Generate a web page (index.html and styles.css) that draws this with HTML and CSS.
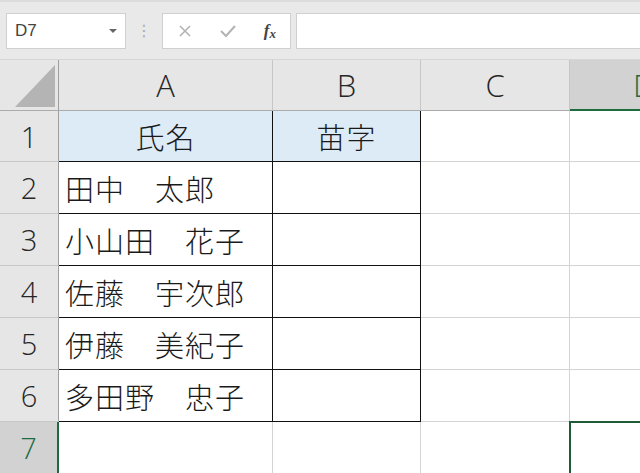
FILE: index.html
```html
<!DOCTYPE html>
<html lang="ja">
<head>
  <meta charset="UTF-8" />
  <meta name="viewport" content="width=device-width, initial-scale=1.0"/>
  <title>Excel - 氏名</title>
  <link rel="stylesheet" href="styles.css">
</head>
<body>
  <!-- 数式バー -->
  <div class="toolbar">
    <div class="namebox">
      <span>D7</span>
      <span class="arrow"></span>
    </div>
    <div class="dots">⋮</div>
    <div class="fxbox">
      <svg width="14" height="14" viewBox="0 0 14 14"><path d="M2 2 L12 12 M12 2 L2 12" stroke="#b3b3b3" stroke-width="1.6" fill="none"/></svg>
      <svg width="18" height="14" viewBox="0 0 18 14"><path d="M2 7 L7 12 L16 2" stroke="#b3b3b3" stroke-width="2" fill="none"/></svg>
      <span class="fx">f<sub>x</sub></span>
    </div>
    <div class="formula"></div>
  </div>

  <!-- シート -->
  <div class="sheet">
    <div class="corner">
      <svg width="59" height="50" viewBox="0 0 59 50"><polygon points="15,47 55,47 55,5" fill="#b4b4b4"/></svg>
    </div>
    <div class="colhead">A</div>
    <div class="colhead">B</div>
    <div class="colhead">C</div>
    <div class="colhead active">D</div>

    <div class="rowhead">1</div>
    <div class="cell b title">氏名</div>
    <div class="cell b title">苗字</div>
    <div class="cell"></div>
    <div class="cell"></div>

    <div class="rowhead">2</div>
    <div class="cell b">田中　太郎</div>
    <div class="cell b"></div>
    <div class="cell"></div>
    <div class="cell"></div>

    <div class="rowhead">3</div>
    <div class="cell b">小山田　花子</div>
    <div class="cell b"></div>
    <div class="cell"></div>
    <div class="cell"></div>

    <div class="rowhead">4</div>
    <div class="cell b">佐藤　宇次郎</div>
    <div class="cell b"></div>
    <div class="cell"></div>
    <div class="cell"></div>

    <div class="rowhead">5</div>
    <div class="cell b">伊藤　美紀子</div>
    <div class="cell b"></div>
    <div class="cell"></div>
    <div class="cell"></div>

    <div class="rowhead">6</div>
    <div class="cell b">多田野　忠子</div>
    <div class="cell b"></div>
    <div class="cell"></div>
    <div class="cell"></div>

    <div class="rowhead active">7</div>
    <div class="cell"></div>
    <div class="cell"></div>
    <div class="cell"></div>
    <div class="cell selected"></div>
  </div>
</body>
</html>
```

FILE: styles.css
```css
body {
  margin: 0;
  width: 640px;
  height: 473px;
  overflow: hidden;
  background: #fff;
  font-family: "Noto Sans CJK JP", sans-serif;
}

.toolbar {
  height: 60px;
  box-sizing: border-box;
  background: #e9e9e9;
  border-top: 2px solid #dcdcdc;
  border-bottom: 1px solid #d6d6d6;
  display: flex;
  align-items: flex-start;
  padding: 11px 0 0 6px;
  white-space: nowrap;
}
.namebox {
  width: 120px;
  height: 36px;
  box-sizing: border-box;
  background: #fff;
  border: 1px solid #d0d0d0;
  display: flex;
  align-items: center;
  justify-content: space-between;
  padding: 0 8px 0 8px;
  font-family: "Liberation Sans", sans-serif;
  font-size: 17px;
  color: #444;
}
.arrow {
  width: 0;
  height: 0;
  border-left: 4px solid transparent;
  border-right: 4px solid transparent;
  border-top: 4px solid #666;
}
.dots {
  width: 36px;
  text-align: center;
  line-height: 36px;
  color: #a8a8a8;
  font-family: "DejaVu Sans", sans-serif;
  font-size: 16px;
}
.fxbox {
  width: 129px;
  height: 36px;
  box-sizing: border-box;
  background: #fff;
  border: 1px solid #d0d0d0;
  display: flex;
  align-items: center;
  justify-content: space-between;
  padding: 0 14px 0 15px;
}
.fx {
  font-family: "Liberation Serif", serif;
  font-style: italic;
  font-weight: bold;
  font-size: 17px;
  color: #444;
}
.fx sub {
  font-size: 13px;
  vertical-align: -2px;
}
.formula {
  flex: 1;
  height: 36px;
  margin-left: 5px;
  box-sizing: border-box;
  background: #fff;
  border: 1px solid #d0d0d0;
  border-right: none;
}

.sheet {
  display: grid;
  grid-template-columns: 59px 214px 148px 149px 149px;
  grid-template-rows: 51px 51px 52px 52px 52px 52px 52px 52px;
}
.sheet > div {
  box-sizing: border-box;
}
.corner {
  background: #e6e6e6;
  border-right: 1px solid #9e9e9e;
  border-bottom: 1px solid #ababab;
}
.corner svg {
  display: block;
}
.colhead {
  background: #e6e6e6;
  border-right: 1px solid #c6c6c6;
  border-bottom: 1px solid #ababab;
  display: flex;
  align-items: center;
  justify-content: center;
  font-family: "Open Sans", sans-serif;
  font-weight: 300;
  font-size: 31px;
  color: #262626;
}
.colhead.active {
  background: #d2d2d2;
  border-bottom: 2px solid #1e6b40;
  color: #1e6b40;
}
.rowhead {
  background: #e6e6e6;
  border-right: 1px solid #9e9e9e;
  border-bottom: 1px solid #c8c8c8;
  display: flex;
  align-items: center;
  justify-content: center;
  font-family: "Open Sans", sans-serif;
  font-weight: 300;
  font-size: 29px;
  color: #262626;
}
.rowhead.active {
  background: #d2d2d2;
  border-right: 2px solid #1e6b40;
  color: #1e6b40;
}
.cell {
  border-right: 1px solid #d4d4d4;
  border-bottom: 1px solid #d4d4d4;
  display: flex;
  align-items: center;
  padding-left: 6px;
  font-size: 29px;
  font-weight: 300;
  letter-spacing: 1px;
  color: #1a1a1a;
  white-space: nowrap;
  overflow: hidden;
}
.cell.b {
  border-right-color: #111;
  border-bottom-color: #111;
}
.cell.title {
  background: #ddebf7;
  justify-content: center;
  padding-left: 0;
}
.cell.selected {
  outline: 2px solid #1e5c38;
  outline-offset: -1px;
}
```
